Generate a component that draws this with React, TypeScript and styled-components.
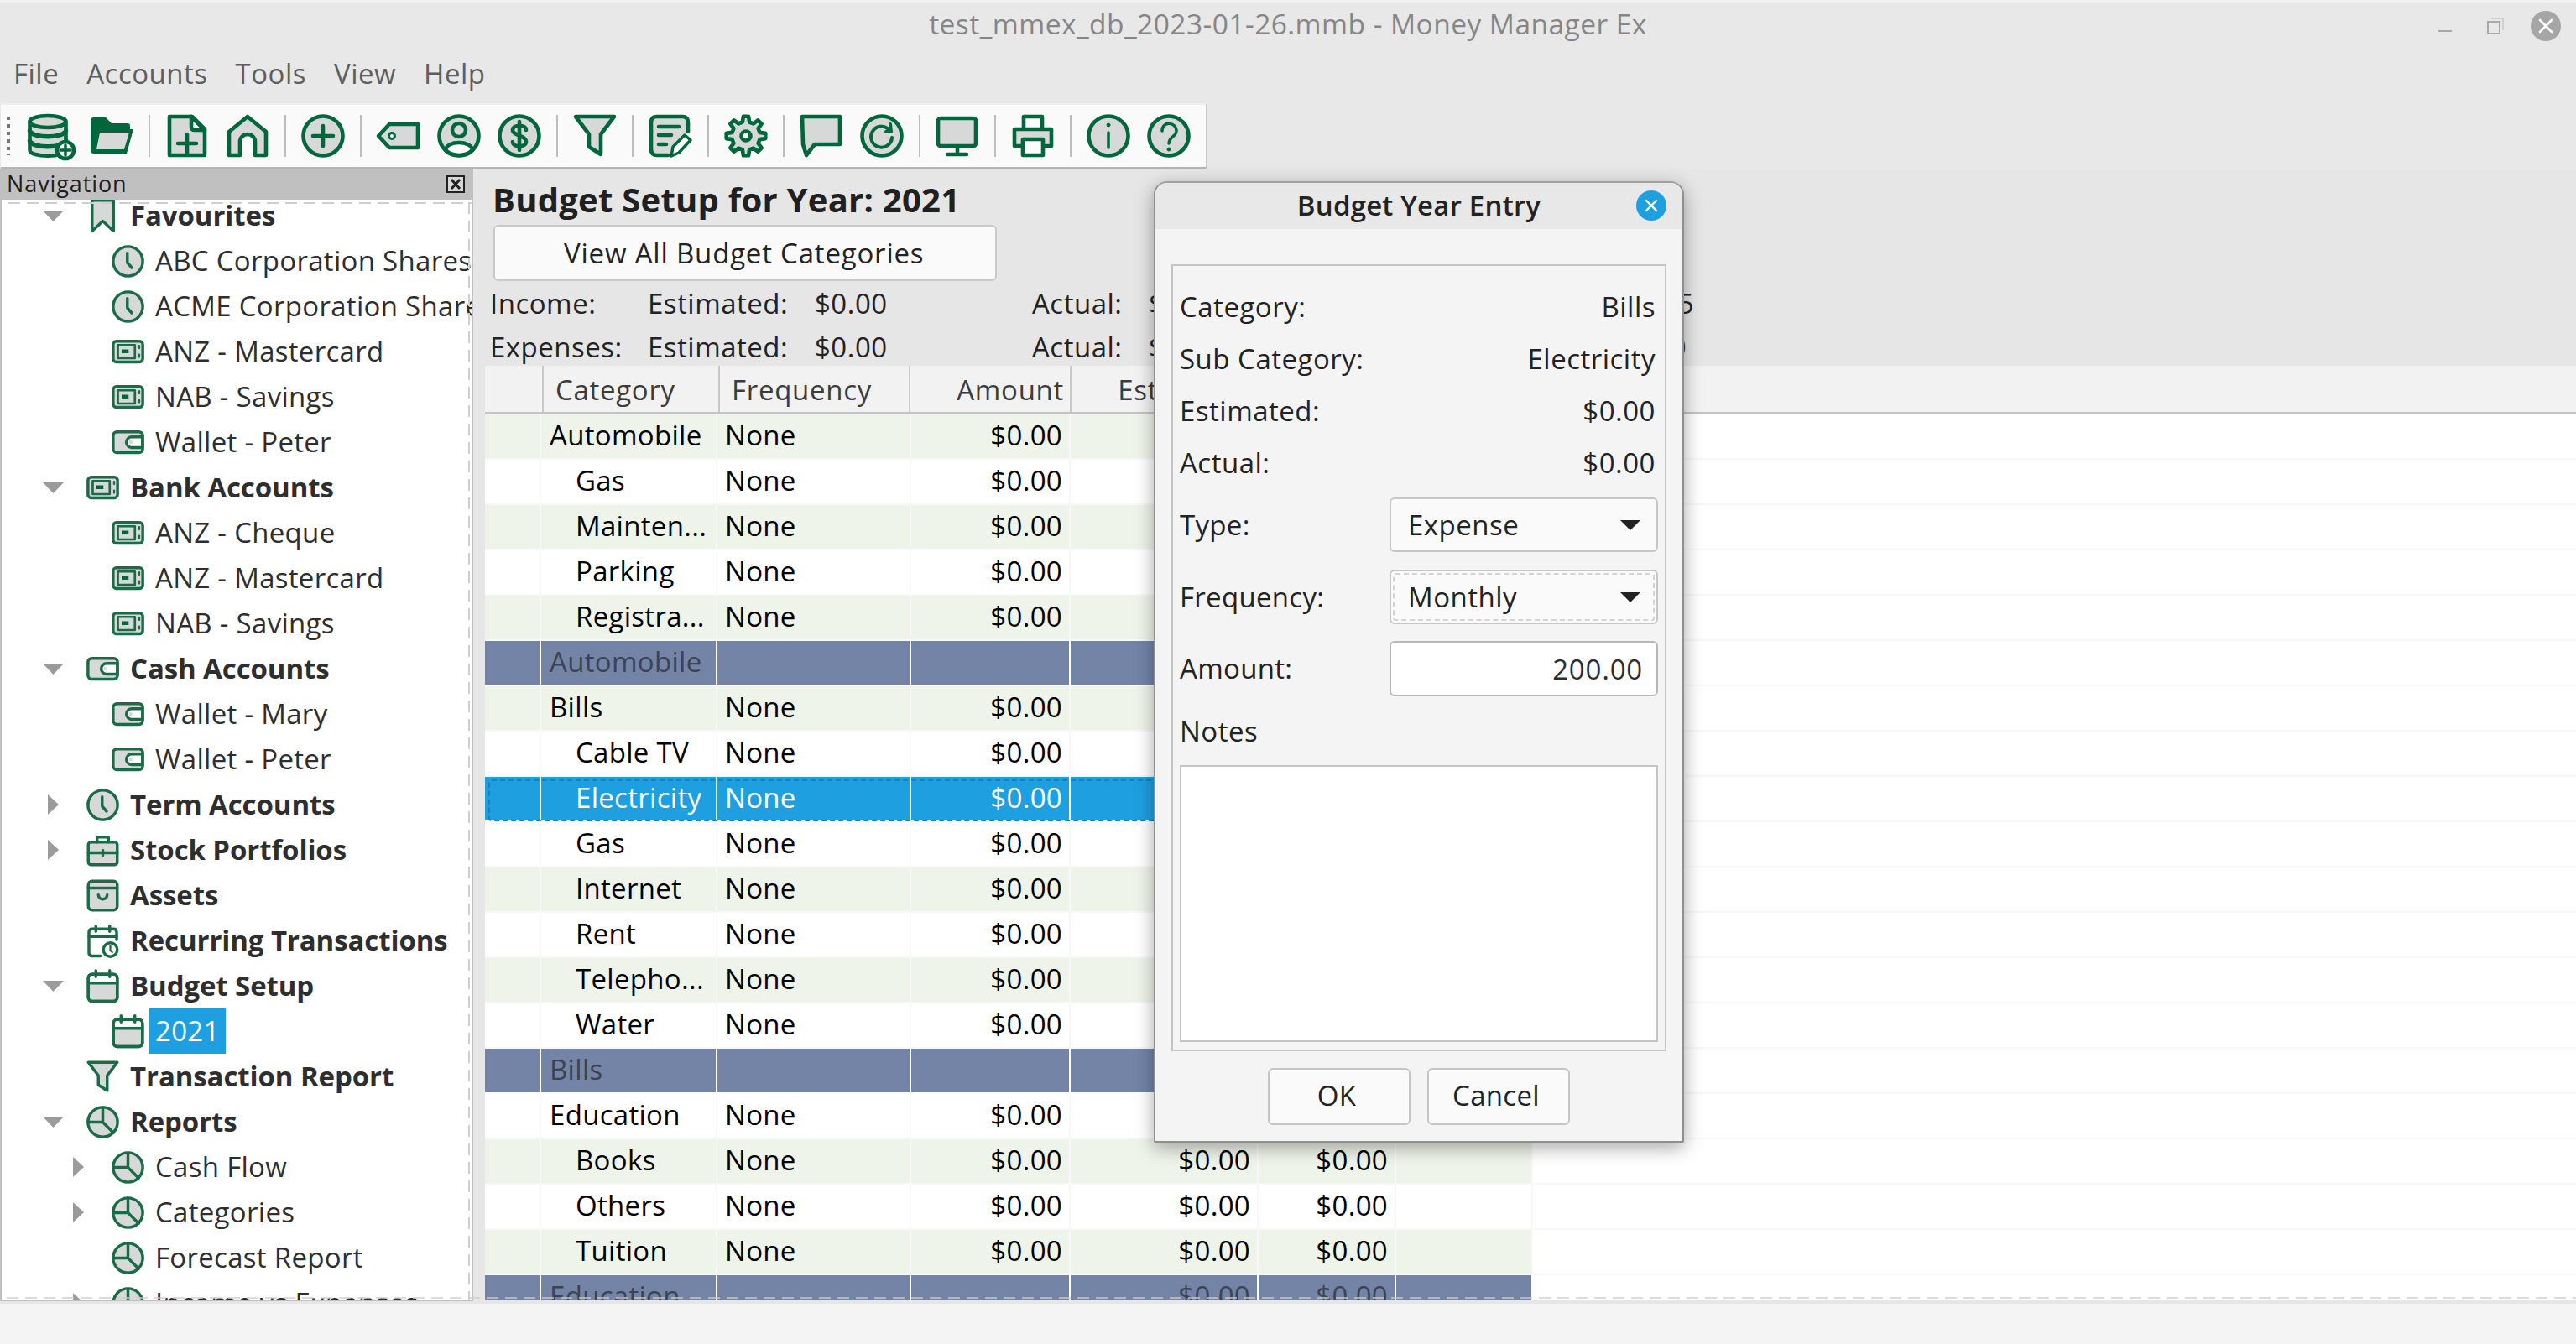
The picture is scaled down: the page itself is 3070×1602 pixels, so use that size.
import React from "react";
import styled, { createGlobalStyle } from "styled-components";

const G = "#00663c";
const SG = "#1c6b48";
const F = "#d6d9d8";
const FONT = `"Open Sans", "Noto Sans", sans-serif`;

const Global = createGlobalStyle`
  html, body { margin: 0; padding: 0; width: 3070px; height: 1602px; overflow: hidden; background: #e8e8e8; }
  body { font-family: ${FONT}; font-size: 33px; letter-spacing: 0.3px; color: #222; }
  * { box-sizing: border-box; }
`;

const Window = styled.div`
  position: relative;
  width: 3070px;
  height: 1602px;
  display: flex;
  flex-direction: column;
  background: #e8e8e8;
  overflow: hidden;
`;

const TitleBar = styled.div`
  height: 64px;
  flex: none;
  display: grid;
  grid-template-columns: 1fr auto 1fr;
  align-items: center;
  border-top: 3px solid #f1f1f1;
  color: #868686;
  font-size: 33.5px;
  font-weight: 500;
  letter-spacing: 0.45px;
  padding-bottom: 12px;
`;

const Title = styled.div`
  grid-column: 2;
`;

const Controls = styled.div`
  grid-column: 3;
  justify-self: end;
  display: flex;
  align-items: center;
  padding-right: 18px;
  margin-top: 6px;
`;

const MenuBar = styled.div`
  height: 59px;
  flex: none;
  display: flex;
  align-items: center;
  gap: 33px;
  padding-left: 16px;
  padding-bottom: 12px;
  color: #5e5e5e;
  letter-spacing: 0.5px;
`;

const MenuItem = styled.div``;

const Toolbar = styled.div`
  width: 1437px;
  height: 78px;
  flex: none;
  display: flex;
  align-items: center;
  margin-left: 1px;
  padding-left: 24px;
  position: relative;
  background: #fafafa;
  border-top: 2px solid #efefef;
  border-right: 1px solid #c8c8c8;
  border-bottom: 2px solid #b4b4b4;
`;

const Grip = styled.div`
  position: absolute;
  left: 7px;
  top: 14px;
  bottom: 14px;
  width: 4px;
  background: repeating-linear-gradient(to bottom, #777 0 4px, transparent 4px 9px);
`;

const ToolSlot = styled.div`
  width: 72px;
  height: 52px;
  display: flex;
  justify-content: center;
  align-items: center;
`;

const ToolSep = styled.div`
  width: 2px;
  height: 50px;
  margin: 0 8px;
  background: #bdbdbd;
`;

const Main = styled.div`
  position: relative;
  flex: none;
  height: 1353px;
  display: flex;
  background: #e6e6e6;
  overflow: hidden;
  &::after {
    content: "";
    position: absolute;
    left: 8px;
    right: 0;
    bottom: 6px;
    height: 2px;
    background: repeating-linear-gradient(to right, rgba(205, 205, 205, 0.7) 0 14px, transparent 14px 22px);
  }
`;

const Nav = styled.div`
  width: 564px;
  flex: none;
  height: 1350px;
  display: flex;
  flex-direction: column;
  background: #fff;
  border-left: 2px solid #c0c0c0;
  border-right: 2px solid #c0c0c0;
  border-bottom: 2px solid #c0c0c0;
`;

const NavHeader = styled.div`
  height: 37px;
  flex: none;
  display: flex;
  align-items: center;
  justify-content: space-between;
  padding: 0 8px 3px 6px;
  background: #c0c0c0;
  font-size: 27px;
  letter-spacing: 0.9px;
  color: #1e1e1e;
`;

const NavClose = styled.div`
  width: 22px;
  height: 21px;
  display: flex;
  margin-top: 3px;
`;

const NavBody = styled.div`
  position: relative;
  flex: 1;
  overflow: hidden;
  &::before {
    content: "";
    position: absolute;
    z-index: 1;
    top: 3px;
    left: 8px;
    right: 0;
    height: 2px;
    background: repeating-linear-gradient(to right, #cfcfcf 0 14px, transparent 14px 22px);
  }
  &::after {
    content: "";
    position: absolute;
    z-index: 1;
    top: 3px;
    bottom: 0;
    right: 2px;
    width: 2px;
    background: repeating-linear-gradient(to bottom, #cfcfcf 0 14px, transparent 14px 22px);
  }
`;

const TreeList = styled.div`
  margin-top: -8px;
`;

const TreeRow = styled.div<{ $level: number }>`
  height: 54px;
  display: flex;
  align-items: center;
  white-space: nowrap;
  padding-left: ${(p) => (p.$level === 1 ? 43 : 73)}px;
  color: #2e2e2e;
`;

const Expander = styled.div`
  width: 58px;
  flex: none;
  display: flex;
  align-items: center;
`;

const ExpanderMark = styled.div`
  width: 36px;
  display: flex;
  justify-content: center;
`;

const TreeIconBox = styled.div`
  width: 39px;
  height: 39px;
  flex: none;
  margin-right: 6px;
  display: flex;
`;

const TreeLabel = styled.div<{ $bold?: boolean; $selected?: boolean }>`
  height: 54px;
  line-height: 54px;
  padding: 0 7px;
  font-weight: ${(p) => (p.$bold ? 700 : 400)};
  letter-spacing: ${(p) => (p.$bold ? "-0.1px" : "0.3px")};
  background: ${(p) => (p.$selected ? "#1e9fe0" : "transparent")};
  color: ${(p) => (p.$selected ? "#fff" : "inherit")};
`;

const Content = styled.div`
  flex: 1;
  min-width: 0;
  display: flex;
  flex-direction: column;
  height: 1349px;
`;

const Heading = styled.div`
  height: 67px;
  flex: none;
  padding: 4px 0 0 23px;
  font-size: 40px;
  font-weight: 700;
  letter-spacing: 0.25px;
  line-height: 66px;
  color: #202020;
`;

const ViewAll = styled.div`
  width: 600px;
  height: 67px;
  flex: none;
  margin-left: 24px;
  display: flex;
  align-items: center;
  padding-left: 82px;
  letter-spacing: 0.8px;
  background: #fafafa;
  border: 2px solid #c9c9c9;
  border-radius: 6px;
`;

const Summary = styled.div`
  flex: none;
  height: 101px;
  padding-left: 20px;
  display: grid;
  grid-template-columns: 188px 199px 259px 139px 300px 350px;
  grid-auto-rows: 52px;
  align-items: center;
  letter-spacing: 0.5px;
  color: #222;
`;

const SummaryEnd = styled.div<{ $inset?: number }>`
  text-align: right;
  padding-right: ${(p) => p.$inset ?? 0}px;
`;

const Table = styled.div`
  flex: 1;
  min-height: 0;
  margin-left: 14px;
  background: #fff;
  overflow: hidden;
  color: #000;
`;

const HeaderRow = styled.div`
  height: 58px;
  display: grid;
  grid-template-columns: 70px 210px 227px 192px 224px 164px 163px 1fr;
  background: #f2f2f2;
  border-bottom: 3px solid #c4c4c4;
  color: #3c3c3c;
  letter-spacing: 0.7px;
`;

const HeaderCell = styled.div<{ $right?: boolean }>`
  display: flex;
  align-items: center;
  justify-content: ${(p) => (p.$right ? "flex-end" : "flex-start")};
  padding: 2px 7px 0 14px;
  border-right: 2px solid #c8c8c8;
  white-space: nowrap;
`;

const BodyRow = styled.div<{ $tone: string }>`
  position: relative;
  height: 54px;
  display: grid;
  grid-template-columns: 67px 210px 231px 190px 224px 164px 163px 1fr;
  color: ${(p) => (p.$tone === "sel" ? "#fff" : p.$tone === "total" ? "#3c4352" : "#000")};
  ${(p) =>
    p.$tone === "sel" &&
    `&::after {
      content: "";
      position: absolute;
      left: 4px;
      top: 3px;
      width: 1243px;
      height: 46px;
      border: 2px dashed #1a80b8;
      border-radius: 4px;
    }`}
`;

const toneBg: Record<string, string> = { green: "#eff4ea", white: "#fff", sel: "#1e9fe0", total: "#7384a7" };

const Cell = styled.div<{ $tone: string; $right?: boolean; $indent?: number }>`
  display: flex;
  align-items: center;
  justify-content: ${(p) => (p.$right ? "flex-end" : "flex-start")};
  padding: 0 8px 3px ${(p) => (p.$indent ? p.$indent : 9)}px;
  background: ${(p) => toneBg[p.$tone]};
  border-right: 2px solid ${(p) => (p.$tone === "total" ? "#fff" : "#f8f8f8")};
  border-bottom: 2px solid ${(p) => (p.$tone === "total" ? "#fff" : "#f8f8f8")};
  white-space: nowrap;
  overflow: hidden;
`;

const FillCell = styled.div`
  border-bottom: 2px solid #f8f8f8;
`;

const StatusBar = styled.div`
  flex: 1;
  background: #f4f4f4;
`;

/* dialog */
const Dialog = styled.div`
  position: absolute;
  left: 1375px;
  top: 216px;
  width: 632px;
  height: 1146px;
  display: flex;
  flex-direction: column;
  background: #f4f4f4;
  border: 2px solid #8f8f8f;
  border-top-color: #a0a0a0;
  border-radius: 16px 16px 2px 2px;
  box-shadow: 0 6px 22px rgba(0, 0, 0, 0.35);
  color: #222;
  overflow: hidden;
`;

const DialogTitle = styled.div`
  position: relative;
  height: 55px;
  flex: none;
  display: flex;
  align-items: center;
  justify-content: center;
  background: #e8e8e8;
  font-weight: 600;
  font-size: 33px;
  letter-spacing: 0.2px;
  padding-bottom: 3px;
`;

const DialogClose = styled.div`
  position: absolute;
  right: 19px;
  top: 9px;
  width: 36px;
  height: 36px;
  display: flex;
`;

const StaticBox = styled.div`
  width: 590px;
  height: 938px;
  margin: 42px 0 0 19px;
  padding: 19px 8px 0;
  flex: none;
  border: 2px solid #c4c4c4;
  display: flex;
  flex-direction: column;
`;

const InfoRow = styled.div`
  height: 62px;
  flex: none;
  display: flex;
  align-items: center;
  justify-content: space-between;
  padding: 0 3px 3px 0;
  letter-spacing: 0.5px;
`;

const FieldRow = styled.div<{ $gap: number }>`
  height: 65px;
  flex: none;
  display: flex;
  align-items: center;
  justify-content: space-between;
  margin-top: ${(p) => p.$gap}px;
`;

const SelectBox = styled.div<{ $focus?: boolean }>`
  position: relative;
  width: 320px;
  height: 65px;
  display: flex;
  align-items: center;
  justify-content: space-between;
  padding: 0 19px 0 20px;
  letter-spacing: 0.5px;
  background: #fafafa;
  border: 2px solid #c6c6c6;
  border-radius: 6px;
  ${(p) =>
    p.$focus &&
    `&::after {
      content: "";
      position: absolute;
      inset: 2px;
      border: 2px dashed #d4d4d4;
      border-radius: 3px;
    }`}
`;

const Caret = styled.div`
  width: 0;
  height: 0;
  border-left: 12px solid transparent;
  border-right: 12px solid transparent;
  border-top: 12px solid #222;
`;

const AmountBox = styled.div`
  width: 320px;
  height: 66px;
  display: flex;
  align-items: center;
  justify-content: flex-end;
  padding: 2px 16px 0 0;
  letter-spacing: 0.8px;
  background: #fff;
  border: 2px solid #b8b8b8;
  border-radius: 6px;
  color: #2e2e2e;
`;

const NotesLabel = styled.div`
  height: 83px;
  flex: none;
  display: flex;
  align-items: center;
  padding-top: 2px;
  letter-spacing: 0.5px;
`;

const NotesBox = styled.div`
  width: 570px;
  height: 330px;
  flex: none;
  background: #fff;
  border: 2px solid #c4c4c4;
`;

const DialogButtons = styled.div`
  flex: none;
  display: flex;
  justify-content: center;
  gap: 20px;
  margin-top: 20px;
`;

const DialogButton = styled.div`
  width: 170px;
  height: 68px;
  display: flex;
  align-items: center;
  justify-content: center;
  padding: 0 6px 3px 0;
  background: #fafafa;
  border: 2px solid #c6c6c6;
  border-radius: 6px;
`;

/* icons */
const S = styled.svg<{ $offset?: number }>`
  display: block;
  overflow: visible;
  flex: none;
  margin-left: ${(p) => p.$offset ?? 0}px;
`;

const gearPath = (() => {
  const pts: string[] = [];
  const n = 8;
  for (let i = 0; i < n; i++) {
    const a = (i / n) * Math.PI * 2 - Math.PI / 2;
    const w = Math.PI / n;
    const p = (r: number, t: number) => `${(26 + r * Math.cos(t)).toFixed(1)} ${(26 + r * Math.sin(t)).toFixed(1)}`;
    pts.push(`${i === 0 ? "M" : "L"}${p(17, a - w * 0.62)}`);
    pts.push(`L${p(23.5, a - w * 0.34)}`);
    pts.push(`L${p(23.5, a + w * 0.34)}`);
    pts.push(`L${p(17, a + w * 0.62)}`);
  }
  return pts.join(" ") + "Z";
})();

function Glyph({ name }: { name: string }) {
  switch (name) {
    case "db":
      return (
        <g transform="translate(-2 0)">
          <path d="M2.5 9V43C2.5 52 45.5 52 45.5 43V9" fill={F} />
          <ellipse cx="24" cy="9" rx="21.5" ry="7" fill={F} />
          <path d="M2.5 20C6 29 42 29 45.5 20M2.5 32C6 41 42 41 45.5 32" fill="none" strokeWidth="5.4" />
          <circle cx="45" cy="43" r="10" fill="#fff" />
          <path d="M39 43H51M45 37V49" fill="none" strokeWidth="3.5" />
        </g>
      );
    case "folder":
      return (
        <>
          <path d="M1 8Q1 4 5 4H19L26 11H45Q48 11 48 14V18H52L44 47H5Q1 47 1 43Z" fill={G} stroke="none" />
          <path d="M12 22H47L41 42H8Z" fill={F} stroke="none" />
        </>
      );
    case "newfile":
      return (
        <>
          <path d="M5 3H32L47 18V49H5Z" fill={F} />
          <path d="M31 3V15Q31 19 35 19H47Z" fill="#fff" />
          <path d="M15 35H37M26 24V46" fill="none" />
        </>
      );
    case "home":
      return <path d="M4 49V21L26 3L48 21V49H35V33A9 9 0 0 0 17 33V49Z" fill={F} />;
    case "plus":
      return (
        <>
          <circle cx="26" cy="26" r="23.5" fill={F} />
          <path d="M14 26H38M26 14V38" fill="none" />
        </>
      );
    case "tag":
      return (
        <>
          <path d="M2 26L15 12H49V40H15Z" fill={F} />
          <circle cx="18" cy="26" r="3.5" fill="#fff" strokeWidth="3" />
        </>
      );
    case "user":
      return (
        <>
          <circle cx="26" cy="26" r="23.5" fill={F} />
          <circle cx="26" cy="19" r="8" fill={F} />
          <path d="M10 43C11 31 41 31 42 43C34 51 18 51 10 43Z" fill="#fff" />
        </>
      );
    case "dollar":
      return (
        <>
          <circle cx="26" cy="26" r="23.5" fill={F} />
          <path d="M34 19C34 12 18 12 18 19C18 26 34 25 34 33C34 40 18 40 18 33M26 9V43" fill="none" />
        </>
      );
    case "funnel":
      return <path d="M3 3H49L33 24V48L19 39V24Z" fill={F} />;
    case "edit":
      return (
        <>
          <path d="M23 49H10Q3 49 3 42V10Q3 3 10 3H40Q47 3 47 10V21" fill={F} />
          <path d="M12 15H36M12 25H27M12 36H21" fill="none" />
          <path d="M27 50L29 39L43 25L50 31L36 46Z" fill="#fff" strokeWidth="3.5" />
        </>
      );
    case "gear":
      return (
        <>
          <path d={gearPath} fill={F} />
          <circle cx="26" cy="26" r="5.5" fill="#fff" />
        </>
      );
    case "chat":
      return <path d="M3 3H48V36H18L8 49L4 36Z" fill={F} />;
    case "refresh":
      return (
        <>
          <circle cx="26" cy="26" r="23.5" fill={F} />
          <path d="M34 18A12.5 12.5 0 1 0 38 28" fill="none" strokeWidth="4" />
          <path d="M31 21L37 21L36 12" fill="none" strokeWidth="4" />
        </>
      );
    case "monitor":
      return (
        <>
          <rect x="3" y="5" width="45" height="33" rx="3" fill={F} />
          <path d="M26 38V47M14 48H37" fill="none" />
        </>
      );
    case "printer":
      return (
        <>
          <path d="M15 18V3H37V18" fill="#fff" />
          <path d="M14 38H4V18H48V38H38" fill={F} />
          <rect x="14" y="30" width="24" height="19" fill="#fff" />
        </>
      );
    case "info":
      return (
        <>
          <circle cx="26" cy="26" r="23.5" fill={F} />
          <path d="M26 22V40" fill="none" strokeWidth="3.5" />
          <circle cx="26" cy="13" r="2" fill={G} strokeWidth="1" />
        </>
      );
    case "help":
      return (
        <>
          <circle cx="26" cy="26" r="23.5" fill={F} />
          <path d="M18 20C18 8 35 9 35 20C35 27 26 27 26 35" fill="none" strokeWidth="3.5" />
          <circle cx="26" cy="42" r="2" fill={G} strokeWidth="1" />
        </>
      );
    case "bookmark":
      return <path d="M9 1H43V50L26 34L9 50Z" fill={F} />;
    case "clock":
      return (
        <>
          <circle cx="26" cy="26" r="23.5" fill={F} />
          <path d="M25 13V28L32 36" fill="none" />
        </>
      );
    case "bank":
      return (
        <>
          <rect x="2.5" y="9" width="47" height="33" rx="5" fill={F} />
          <rect x="10" y="15" width="27" height="21" fill={F} strokeWidth="3.6" />
          <rect x="16" y="22" width="11" height="6" fill={G} stroke="none" />
          <path d="M44 16V20M44 30V34" fill="none" strokeWidth="3" />
        </>
      );
    case "wallet":
      return (
        <>
          <rect x="2.5" y="9" width="47" height="33" rx="6" fill={F} />
          <path d="M49 17H32A8.5 8.5 0 0 0 32 34H49Z" fill="#fff" />
          <rect x="28" y="23" width="5" height="5" fill={F} stroke="none" />
        </>
      );
    case "case":
      return (
        <>
          <rect x="3" y="13" width="46" height="36" rx="4" fill={F} />
          <path d="M17 13V5H35V13" fill="none" />
          <path d="M3 30H49M26 26V34" fill="none" />
        </>
      );
    case "assets":
      return (
        <>
          <rect x="3" y="3" width="46" height="46" rx="6" fill={F} />
          <path d="M3 14H49" fill="none" />
          <path d="M19 25C20 34 32 34 33 25" fill="none" />
        </>
      );
    case "recurring":
      return (
        <>
          <path d="M48 24V12Q48 7 43 7H9Q4 7 4 12V45Q4 50 9 50H22" fill="none" />
          <path d="M4 19H48M15 2V11M37 2V11" fill="none" />
          <circle cx="38" cy="40" r="11" fill="#fff" />
          <path d="M38 34V41L41 44" fill="none" strokeWidth="3" />
        </>
      );
    case "calendar":
      return (
        <>
          <rect x="3" y="7" width="46" height="43" rx="6" fill={F} />
          <path d="M3 8H49V21H3Z" fill="#fff" stroke="none" />
          <rect x="3" y="7" width="46" height="43" rx="6" fill="none" />
          <path d="M3 21H49M15 1V11M37 1V11" fill="none" />
        </>
      );
    case "pie":
      return (
        <>
          <circle cx="26" cy="26" r="23.5" fill={F} />
          <path d="M26 3V26L43 43M26 26H3" fill="none" />
        </>
      );
    default:
      return null;
  }
}

function Icon({ name, size, color }: { name: string; size: number; color: string }) {
  return (
    <S width={size} height={size} viewBox="0 0 52 52" stroke={color} strokeWidth={4.6} strokeLinejoin="round" strokeLinecap="round">
      <Glyph name={name} />
    </S>
  );
}

const Chevron = ({ open }: { open: boolean }) =>
  open ? (
    <S width="25" height="13" viewBox="0 0 25 13">
      <path d="M0 0H25L12.5 13Z" fill="#9b9b9b" />
    </S>
  ) : (
    <S width="13" height="24" viewBox="0 0 13 24">
      <path d="M0 0L13 12L0 24Z" fill="#9b9b9b" />
    </S>
  );

const toolGroups = [
  ["db", "folder"],
  ["newfile", "home"],
  ["plus"],
  ["tag", "user", "dollar"],
  ["funnel"],
  ["edit"],
  ["gear"],
  ["chat", "refresh"],
  ["monitor"],
  ["printer"],
  ["info", "help"],
];

type Node = { t: string; i: string; l: 1 | 2; b?: boolean; e?: "open" | "closed"; s?: boolean };
const tree: Node[] = [
  { t: "Favourites", i: "bookmark", l: 1, b: true, e: "open" },
  { t: "ABC Corporation Shares", i: "clock", l: 2 },
  { t: "ACME Corporation Shares", i: "clock", l: 2 },
  { t: "ANZ - Mastercard", i: "bank", l: 2 },
  { t: "NAB - Savings", i: "bank", l: 2 },
  { t: "Wallet - Peter", i: "wallet", l: 2 },
  { t: "Bank Accounts", i: "bank", l: 1, b: true, e: "open" },
  { t: "ANZ - Cheque", i: "bank", l: 2 },
  { t: "ANZ - Mastercard", i: "bank", l: 2 },
  { t: "NAB - Savings", i: "bank", l: 2 },
  { t: "Cash Accounts", i: "wallet", l: 1, b: true, e: "open" },
  { t: "Wallet - Mary", i: "wallet", l: 2 },
  { t: "Wallet - Peter", i: "wallet", l: 2 },
  { t: "Term Accounts", i: "clock", l: 1, b: true, e: "closed" },
  { t: "Stock Portfolios", i: "case", l: 1, b: true, e: "closed" },
  { t: "Assets", i: "assets", l: 1, b: true },
  { t: "Recurring Transactions", i: "recurring", l: 1, b: true },
  { t: "Budget Setup", i: "calendar", l: 1, b: true, e: "open" },
  { t: "2021", i: "calendar", l: 2, s: true },
  { t: "Transaction Report", i: "funnel", l: 1, b: true },
  { t: "Reports", i: "pie", l: 1, b: true, e: "open" },
  { t: "Cash Flow", i: "pie", l: 2, e: "closed" },
  { t: "Categories", i: "pie", l: 2, e: "closed" },
  { t: "Forecast Report", i: "pie", l: 2 },
  { t: "Income vs Expenses", i: "pie", l: 2, e: "closed" },
];

type Row = { c: string; sub?: boolean; total?: boolean };
const rows: Row[] = [
  { c: "Automobile" },
  { c: "Gas", sub: true },
  { c: "Mainten...", sub: true },
  { c: "Parking", sub: true },
  { c: "Registra...", sub: true },
  { c: "Automobile", total: true },
  { c: "Bills" },
  { c: "Cable TV", sub: true },
  { c: "Electricity", sub: true },
  { c: "Gas", sub: true },
  { c: "Internet", sub: true },
  { c: "Rent", sub: true },
  { c: "Telepho...", sub: true },
  { c: "Water", sub: true },
  { c: "Bills", total: true },
  { c: "Education" },
  { c: "Books", sub: true },
  { c: "Others", sub: true },
  { c: "Tuition", sub: true },
  { c: "Education", total: true },
];

export default function App() {
  return (
    <Window>
      <Global />
      <TitleBar>
        <Title>test_mmex_db_2023-01-26.mmb - Money Manager Ex</Title>
        <Controls>
          <S width="16" height="20" viewBox="0 0 16 20">
            <rect x="0" y="15" width="16" height="2" fill="#a8a8a8" />
          </S>
          <S width="20" height="20" viewBox="0 0 20 20" $offset={42}>
            <path d="M5 1H19V15" fill="none" stroke="#d0d0d0" strokeWidth="2" />
            <rect x="1" y="5" width="14" height="14" fill="none" stroke="#a8a8a8" strokeWidth="2" />
          </S>
          <S width="36" height="36" viewBox="0 0 36 36" $offset={32}>
            <circle cx="18" cy="18" r="18" fill="#a6a6a6" />
            <path d="M11 11L25 25M25 11L11 25" stroke="#fff" strokeWidth="2.6" strokeLinecap="round" />
          </S>
        </Controls>
      </TitleBar>
      <MenuBar>
        {["File", "Accounts", "Tools", "View", "Help"].map((m) => (
          <MenuItem key={m}>{m}</MenuItem>
        ))}
      </MenuBar>
      <Toolbar>
        <Grip />
        {toolGroups.map((g, i) => (
          <React.Fragment key={i}>
            {i > 0 && <ToolSep />}
            {g.map((n) => (
              <ToolSlot key={n}>
                <Icon name={n} size={52} color={G} />
              </ToolSlot>
            ))}
          </React.Fragment>
        ))}
      </Toolbar>
      <Main>
        <Nav>
          <NavHeader>
            <span>Navigation</span>
            <NavClose>
              <S width="22" height="21" viewBox="0 0 22 21">
                <rect x="1" y="1" width="20" height="19" fill="#d8d8d8" stroke="#222" strokeWidth="2" />
                <path d="M6 5L16 16M16 5L6 16" stroke="#222" strokeWidth="3" />
              </S>
            </NavClose>
          </NavHeader>
          <NavBody>
            <TreeList>
              {tree.map((n, i) => (
                <TreeRow key={i} $level={n.l}>
                  <Expander>
                    <ExpanderMark>{n.e && <Chevron open={n.e === "open"} />}</ExpanderMark>
                  </Expander>
                  <TreeIconBox>
                    <Icon name={n.i} size={39} color={SG} />
                  </TreeIconBox>
                  <TreeLabel $bold={n.b} $selected={n.s}>
                    {n.t}
                  </TreeLabel>
                </TreeRow>
              ))}
            </TreeList>
          </NavBody>
        </Nav>
        <Content>
          <Heading>Budget Setup for Year: 2021</Heading>
          <ViewAll>View All Budget Categories</ViewAll>
          <Summary>
            <div>Income:</div>
            <div>Estimated:</div>
            <div>$0.00</div>
            <div>Actual:</div>
            <div>$0.00</div>
            <SummaryEnd>5</SummaryEnd>
            <div>Expenses:</div>
            <div>Estimated:</div>
            <div>$0.00</div>
            <div>Actual:</div>
            <div>$0.00</div>
            <SummaryEnd $inset={9}>0</SummaryEnd>
          </Summary>
          <Table>
            <HeaderRow>
              <HeaderCell />
              <HeaderCell>Category</HeaderCell>
              <HeaderCell>Frequency</HeaderCell>
              <HeaderCell $right>Amount</HeaderCell>
              <HeaderCell $right>Estimated</HeaderCell>
              <HeaderCell $right>Actual</HeaderCell>
              <HeaderCell>Notes</HeaderCell>
            </HeaderRow>
            {rows.map((r, i) => {
              const tone = r.total ? "total" : i === 8 ? "sel" : i % 2 === 0 ? "green" : "white";
              return (
                <BodyRow key={i} $tone={tone}>
                  <Cell $tone={tone} />
                  <Cell $tone={tone} $indent={r.sub ? 41 : 10}>
                    {r.c}
                  </Cell>
                  <Cell $tone={tone}>{r.total ? "" : "None"}</Cell>
                  <Cell $tone={tone} $right>
                    {r.total ? "" : "$0.00"}
                  </Cell>
                  <Cell $tone={tone} $right>
                    $0.00
                  </Cell>
                  <Cell $tone={tone} $right>
                    $0.00
                  </Cell>
                  <Cell $tone={tone} />
                  <FillCell />
                </BodyRow>
              );
            })}
          </Table>
        </Content>
      </Main>
      <StatusBar />
      <Dialog>
        <DialogTitle>
          Budget Year Entry
          <DialogClose>
            <S width="36" height="36" viewBox="0 0 36 36">
              <circle cx="18" cy="18" r="18" fill="#1e9fe0" />
              <path d="M12 12L24 24M24 12L12 24" stroke="#fff" strokeWidth="2.4" strokeLinecap="round" />
            </S>
          </DialogClose>
        </DialogTitle>
        <StaticBox>
          <InfoRow>
            <span>Category:</span>
            <span>Bills</span>
          </InfoRow>
          <InfoRow>
            <span>Sub Category:</span>
            <span>Electricity</span>
          </InfoRow>
          <InfoRow>
            <span>Estimated:</span>
            <span>$0.00</span>
          </InfoRow>
          <InfoRow>
            <span>Actual:</span>
            <span>$0.00</span>
          </InfoRow>
          <FieldRow $gap={9}>
            <span>Type:</span>
            <SelectBox>
              Expense
              <Caret />
            </SelectBox>
          </FieldRow>
          <FieldRow $gap={21}>
            <span>Frequency:</span>
            <SelectBox $focus>
              Monthly
              <Caret />
            </SelectBox>
          </FieldRow>
          <FieldRow $gap={20}>
            <span>Amount:</span>
            <AmountBox>200.00</AmountBox>
          </FieldRow>
          <NotesLabel>Notes</NotesLabel>
          <NotesBox />
        </StaticBox>
        <DialogButtons>
          <DialogButton>OK</DialogButton>
          <DialogButton>Cancel</DialogButton>
        </DialogButtons>
      </Dialog>
    </Window>
  );
}
